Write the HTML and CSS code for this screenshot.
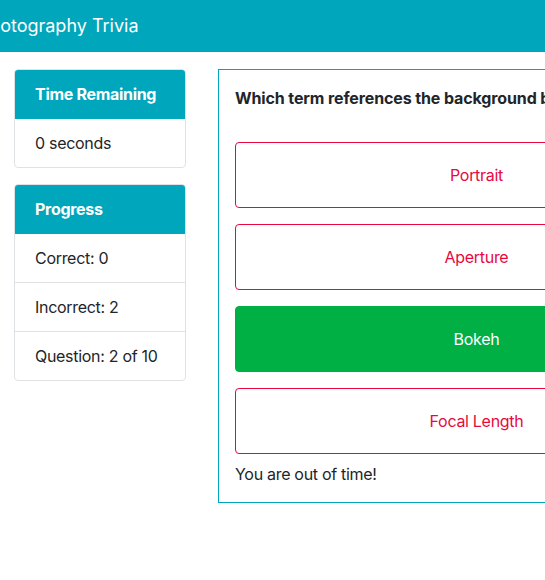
FILE: index.html
```html
<!DOCTYPE html>
<html lang="en">
<head>
<meta charset="utf-8">
<title>Photography Trivia</title>
<link rel="stylesheet" href="styles.css">
</head>
<body>
<header class="topbar">
  <h1 class="brand">Photography Trivia</h1>
</header>
<div class="layout">
  <aside class="sidebar">
    <section class="card">
      <div class="card-header">Time Remaining</div>
      <ul class="list">
        <li class="list-item">0 seconds</li>
      </ul>
    </section>
    <section class="card">
      <div class="card-header">Progress</div>
      <ul class="list">
        <li class="list-item">Correct: 0</li>
        <li class="list-item">Incorrect: 2</li>
        <li class="list-item">Question: 2 of 10</li>
      </ul>
    </section>
  </aside>
  <main class="quiz">
    <h2 class="question">Which term references the background blur in a photograph?</h2>
    <div class="answers">
      <button class="answer wrong">Portrait</button>
      <button class="answer wrong">Aperture</button>
      <button class="answer right">Bokeh</button>
      <button class="answer wrong">Focal Length</button>
    </div>
    <p class="status">You are out of time!</p>
  </main>
</div>
</body>
</html>
```

FILE: styles.css
```css
html, body {
  margin: 0;
  padding: 0;
  overflow: hidden;
}
body {
  font-family: Inter, "Helvetica Neue", Arial, sans-serif;
  font-size: 16px;
  line-height: 24px;
  letter-spacing: -0.3px;
  color: #212529;
  background: #fff;
  width: 545px;
  height: 580px;
}
.topbar {
  background: #00a6bc;
  height: 52px;
  display: flex;
  align-items: center;
  overflow: hidden;
}
.brand {
  margin: 0 0 0 -22px;
  font-size: 18px;
  font-weight: 400;
  line-height: 28px;
  letter-spacing: 0;
  color: #fff;
  white-space: nowrap;
}
.layout {
  display: flex;
  align-items: flex-start;
  gap: 32px;
  padding: 17px 0 0 14px;
}
.sidebar {
  flex: 0 0 172px;
  display: flex;
  flex-direction: column;
  gap: 16px;
}
.card {
  border: 1px solid #dfe2e5;
  border-radius: 4px;
  overflow: hidden;
}
.card-header {
  background: #00a6bc;
  color: #fff;
  font-weight: 700;
  padding: 12px 20px;
  border-bottom: 1px solid #00a6bc;
}
.list {
  list-style: none;
  margin: 0;
  padding: 0;
}
.list-item {
  padding: 12px 20px;
  border-top: 1px solid #dfe2e5;
}
.list-item:first-child {
  border-top: 0;
}
.quiz {
  flex: 0 0 517px;
  box-sizing: border-box;
  border: 1px solid #00a6bc;
  padding: 16px;
}
.question {
  margin: 0 0 32px;
  font-size: 16px;
  font-weight: 700;
  line-height: 24px;
  letter-spacing: -0.12px;
  white-space: nowrap;
}
.answers {
  display: flex;
  flex-direction: column;
  gap: 16px;
}
.answer {
  display: block;
  width: 100%;
  height: 66px;
  font-family: inherit;
  font-size: 16px;
  letter-spacing: inherit;
  border-radius: 4px;
  background: #fff;
  cursor: pointer;
}
.answer.wrong {
  border: 1px solid #e8083e;
  color: #e8083e;
}
.answer.right {
  border: 1px solid #00b045;
  background: #00b045;
  color: #fff;
}
.status {
  margin: 8px 0 0;
}
```
